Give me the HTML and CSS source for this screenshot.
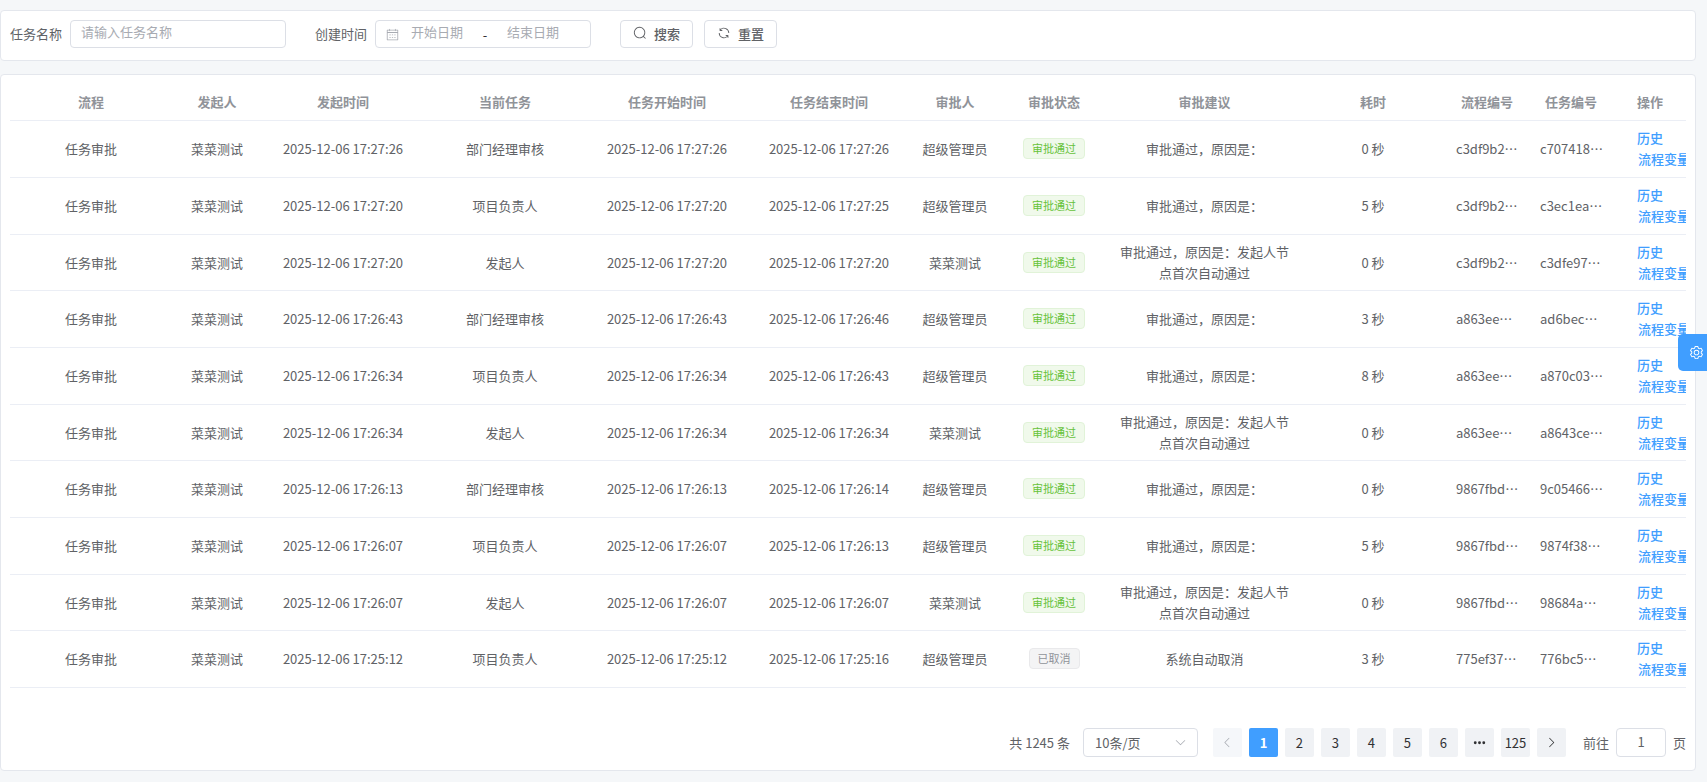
FILE: index.html
```
<!DOCTYPE html>
<html lang="zh-CN">
<head>
    <meta charset="UTF-8">
    <meta name="viewport" content="width=device-width, initial-scale=1.0">
    <title>流程任务</title>
    <link rel="stylesheet" href="styles.css">
</head>
<body>
    <main class="page">
        <form class="card search-form">
            <div class="form-item">
                <label for="taskName">任务名称</label>
                <input class="input" type="text" id="taskName" placeholder="请输入任务名称">
            </div>
            <div class="form-item">
                <label for="startDate">创建时间</label>
                <div class="date-range">
                    <svg class="icon" viewBox="0 0 1024 1024"><path d="M128 384v512h768V192H768v32a32 32 0 1 1-64 0v-32H320v32a32 32 0 0 1-64 0v-32H128v128h768v64H128zm192-256h384V96a32 32 0 1 1 64 0v32h160a32 32 0 0 1 32 32v768a32 32 0 0 1-32 32H96a32 32 0 0 1-32-32V160a32 32 0 0 1 32-32h160V96a32 32 0 0 1 64 0v32zm-32 384h64a32 32 0 0 1 0 64h-64a32 32 0 0 1 0-64zm0 192h64a32 32 0 1 1 0 64h-64a32 32 0 1 1 0-64zm192-192h64a32 32 0 0 1 0 64h-64a32 32 0 0 1 0-64zm0 192h64a32 32 0 1 1 0 64h-64a32 32 0 1 1 0-64zm192-192h64a32 32 0 1 1 0 64h-64a32 32 0 1 1 0-64zm0 192h64a32 32 0 1 1 0 64h-64a32 32 0 1 1 0-64z"/></svg>
                    <input type="text" id="startDate" placeholder="开始日期">
                    <span>-</span>
                    <input type="text" id="endDate" placeholder="结束日期" aria-label="结束日期">
                </div>
            </div>
            <div class="form-buttons">
                <button class="btn" type="button">
                    <svg class="icon" viewBox="0 0 1024 1024"><path d="m795.904 750.72 124.992 124.928a32 32 0 0 1-45.248 45.248L750.656 795.904a416 416 0 1 1 45.248-45.248zM480 832a352 352 0 1 0 0-704 352 352 0 0 0 0 704z"/></svg>
                    搜索
                </button>
                <button class="btn" type="button">
                    <svg class="icon" viewBox="0 0 1024 1024"><path d="M771.776 794.88A384 384 0 0 1 128 512h64a320 320 0 0 0 555.712 216.448H654.72a32 32 0 1 1 0-64h149.056a32 32 0 0 1 32 32v148.928a32 32 0 1 1-64 0v-50.56zM276.288 295.616h92.992a32 32 0 0 1 0 64H220.16a32 32 0 0 1-32-32V178.56a32 32 0 0 1 64 0v50.56A384 384 0 0 1 896.128 512h-64a320 320 0 0 0-555.776-216.384z"/></svg>
                    重置
                </button>
            </div>
        </form>

        <section class="card">
            <table class="task-table">
                <colgroup>
                    <col class="w-lg">
                    <col class="w-sm">
                    <col class="w-lg">
                    <col class="w-lg">
                    <col class="w-lg">
                    <col class="w-lg">
                    <col class="w-sm">
                    <col class="w-status">
                    <col>
                    <col class="w-duration">
                    <col class="w-id">
                    <col class="w-id">
                    <col class="w-ops">
                </colgroup>
                <thead>
                    <tr>
                        <th>流程</th>
                        <th>发起人</th>
                        <th>发起时间</th>
                        <th>当前任务</th>
                        <th>任务开始时间</th>
                        <th>任务结束时间</th>
                        <th>审批人</th>
                        <th>审批状态</th>
                        <th>审批建议</th>
                        <th>耗时</th>
                        <th>流程编号</th>
                        <th>任务编号</th>
                        <th class="ops">操作</th>
                    </tr>
                </thead>
                <tbody>
                    <tr>
                        <td>任务审批</td>
                        <td>菜菜测试</td>
                        <td>2025-12-06 17:27:26</td>
                        <td>部门经理审核</td>
                        <td>2025-12-06 17:27:26</td>
                        <td>2025-12-06 17:27:26</td>
                        <td>超级管理员</td>
                        <td><span class="tag success">审批通过</span></td>
                        <td>审批通过，原因是：</td>
                        <td>0 秒</td>
                        <td class="id">c3df9b2…</td>
                        <td class="id">c707418…</td>
                        <td class="ops"><button class="link">历史</button><button class="link">流程变量</button></td>
                    </tr>
                    <tr>
                        <td>任务审批</td>
                        <td>菜菜测试</td>
                        <td>2025-12-06 17:27:20</td>
                        <td>项目负责人</td>
                        <td>2025-12-06 17:27:20</td>
                        <td>2025-12-06 17:27:25</td>
                        <td>超级管理员</td>
                        <td><span class="tag success">审批通过</span></td>
                        <td>审批通过，原因是：</td>
                        <td>5 秒</td>
                        <td class="id">c3df9b2…</td>
                        <td class="id">c3ec1ea…</td>
                        <td class="ops"><button class="link">历史</button><button class="link">流程变量</button></td>
                    </tr>
                    <tr>
                        <td>任务审批</td>
                        <td>菜菜测试</td>
                        <td>2025-12-06 17:27:20</td>
                        <td>发起人</td>
                        <td>2025-12-06 17:27:20</td>
                        <td>2025-12-06 17:27:20</td>
                        <td>菜菜测试</td>
                        <td><span class="tag success">审批通过</span></td>
                        <td>审批通过，原因是：发起人节点首次自动通过</td>
                        <td>0 秒</td>
                        <td class="id">c3df9b2…</td>
                        <td class="id">c3dfe97…</td>
                        <td class="ops"><button class="link">历史</button><button class="link">流程变量</button></td>
                    </tr>
                    <tr>
                        <td>任务审批</td>
                        <td>菜菜测试</td>
                        <td>2025-12-06 17:26:43</td>
                        <td>部门经理审核</td>
                        <td>2025-12-06 17:26:43</td>
                        <td>2025-12-06 17:26:46</td>
                        <td>超级管理员</td>
                        <td><span class="tag success">审批通过</span></td>
                        <td>审批通过，原因是：</td>
                        <td>3 秒</td>
                        <td class="id">a863ee…</td>
                        <td class="id">ad6bec…</td>
                        <td class="ops"><button class="link">历史</button><button class="link">流程变量</button></td>
                    </tr>
                    <tr>
                        <td>任务审批</td>
                        <td>菜菜测试</td>
                        <td>2025-12-06 17:26:34</td>
                        <td>项目负责人</td>
                        <td>2025-12-06 17:26:34</td>
                        <td>2025-12-06 17:26:43</td>
                        <td>超级管理员</td>
                        <td><span class="tag success">审批通过</span></td>
                        <td>审批通过，原因是：</td>
                        <td>8 秒</td>
                        <td class="id">a863ee…</td>
                        <td class="id">a870c03…</td>
                        <td class="ops"><button class="link">历史</button><button class="link">流程变量</button></td>
                    </tr>
                    <tr>
                        <td>任务审批</td>
                        <td>菜菜测试</td>
                        <td>2025-12-06 17:26:34</td>
                        <td>发起人</td>
                        <td>2025-12-06 17:26:34</td>
                        <td>2025-12-06 17:26:34</td>
                        <td>菜菜测试</td>
                        <td><span class="tag success">审批通过</span></td>
                        <td>审批通过，原因是：发起人节点首次自动通过</td>
                        <td>0 秒</td>
                        <td class="id">a863ee…</td>
                        <td class="id">a8643ce…</td>
                        <td class="ops"><button class="link">历史</button><button class="link">流程变量</button></td>
                    </tr>
                    <tr>
                        <td>任务审批</td>
                        <td>菜菜测试</td>
                        <td>2025-12-06 17:26:13</td>
                        <td>部门经理审核</td>
                        <td>2025-12-06 17:26:13</td>
                        <td>2025-12-06 17:26:14</td>
                        <td>超级管理员</td>
                        <td><span class="tag success">审批通过</span></td>
                        <td>审批通过，原因是：</td>
                        <td>0 秒</td>
                        <td class="id">9867fbd…</td>
                        <td class="id">9c05466…</td>
                        <td class="ops"><button class="link">历史</button><button class="link">流程变量</button></td>
                    </tr>
                    <tr>
                        <td>任务审批</td>
                        <td>菜菜测试</td>
                        <td>2025-12-06 17:26:07</td>
                        <td>项目负责人</td>
                        <td>2025-12-06 17:26:07</td>
                        <td>2025-12-06 17:26:13</td>
                        <td>超级管理员</td>
                        <td><span class="tag success">审批通过</span></td>
                        <td>审批通过，原因是：</td>
                        <td>5 秒</td>
                        <td class="id">9867fbd…</td>
                        <td class="id">9874f38…</td>
                        <td class="ops"><button class="link">历史</button><button class="link">流程变量</button></td>
                    </tr>
                    <tr>
                        <td>任务审批</td>
                        <td>菜菜测试</td>
                        <td>2025-12-06 17:26:07</td>
                        <td>发起人</td>
                        <td>2025-12-06 17:26:07</td>
                        <td>2025-12-06 17:26:07</td>
                        <td>菜菜测试</td>
                        <td><span class="tag success">审批通过</span></td>
                        <td>审批通过，原因是：发起人节点首次自动通过</td>
                        <td>0 秒</td>
                        <td class="id">9867fbd…</td>
                        <td class="id">98684a…</td>
                        <td class="ops"><button class="link">历史</button><button class="link">流程变量</button></td>
                    </tr>
                    <tr>
                        <td>任务审批</td>
                        <td>菜菜测试</td>
                        <td>2025-12-06 17:25:12</td>
                        <td>项目负责人</td>
                        <td>2025-12-06 17:25:12</td>
                        <td>2025-12-06 17:25:16</td>
                        <td>超级管理员</td>
                        <td><span class="tag info">已取消</span></td>
                        <td>系统自动取消</td>
                        <td>3 秒</td>
                        <td class="id">775ef37…</td>
                        <td class="id">776bc5…</td>
                        <td class="ops"><button class="link">历史</button><button class="link">流程变量</button></td>
                    </tr>
                </tbody>
            </table>

            <nav class="pagination" aria-label="分页">
                <span class="total">共 1245 条</span>
                <div class="page-size">
                    <select aria-label="每页条数">
                        <option>10条/页</option>
                    </select>
                    <svg class="icon" viewBox="0 0 1024 1024"><path d="M831.872 340.864 512 652.672 192.128 340.864a30.592 30.592 0 0 0-42.752 0 29.12 29.12 0 0 0 0 41.6L489.664 714.24a32 32 0 0 0 44.672 0l340.288-331.712a29.12 29.12 0 0 0 0-41.728 30.592 30.592 0 0 0-42.752 0z"/></svg>
                </div>
                <div class="pager">
                    <button disabled aria-label="上一页"><svg class="icon" viewBox="0 0 1024 1024"><path d="M609.408 149.376 277.76 489.6a32 32 0 0 0 0 44.672l331.648 340.352a29.12 29.12 0 0 0 41.728 0 30.592 30.592 0 0 0 0-42.752L339.264 511.936l311.872-319.872a30.592 30.592 0 0 0 0-42.688 29.12 29.12 0 0 0-41.728 0z"/></svg></button>
                    <button class="active">1</button>
                    <button>2</button>
                    <button>3</button>
                    <button>4</button>
                    <button>5</button>
                    <button>6</button>
                    <button aria-label="更多"><svg class="icon" viewBox="0 0 1024 1024"><path d="M176 416a112 112 0 1 1 0 224 112 112 0 0 1 0-224zm336 0a112 112 0 1 1 0 224 112 112 0 0 1 0-224zm336 0a112 112 0 1 1 0 224 112 112 0 0 1 0-224z"/></svg></button>
                    <button>125</button>
                    <button aria-label="下一页"><svg class="icon" viewBox="0 0 1024 1024"><path d="M340.864 149.312a30.592 30.592 0 0 0 0 42.752L652.736 512 340.864 831.872a30.592 30.592 0 0 0 0 42.752 29.12 29.12 0 0 0 41.728 0L714.24 534.336a32 32 0 0 0 0-44.672L382.592 149.376a29.12 29.12 0 0 0-41.728 0z"/></svg></button>
                </div>
                <div class="jump">
                    <label for="jumpPage">前往</label>
                    <input class="input" type="text" id="jumpPage" value="1">
                    <span>页</span>
                </div>
            </nav>
        </section>
    </main>

    <button class="setting" aria-label="设置">
        <svg class="icon" viewBox="0 0 1024 1024"><path d="M600.704 64a32 32 0 0 1 30.464 22.208l35.2 109.376c14.784 7.232 28.928 15.36 42.432 24.512l112.384-24.192a32 32 0 0 1 34.432 15.36L944.32 364.8a32 32 0 0 1-4.032 37.504l-77.12 85.12a357.12 357.12 0 0 1 0 49.024l77.12 85.248a32 32 0 0 1 4.032 37.504l-88.704 153.6a32 32 0 0 1-34.432 15.296L708.8 803.904c-13.44 9.088-27.648 17.28-42.368 24.512l-35.264 109.376A32 32 0 0 1 600.704 960H423.296a32 32 0 0 1-30.464-22.208L357.696 828.48a351.616 351.616 0 0 1-42.56-24.64l-112.32 24.256a32 32 0 0 1-34.432-15.36L79.68 659.2a32 32 0 0 1 4.032-37.504l77.12-85.248a357.12 357.12 0 0 1 0-48.896l-77.12-85.248A32 32 0 0 1 79.68 364.8l88.704-153.6a32 32 0 0 1 34.432-15.296l112.32 24.256c13.568-9.152 27.776-17.408 42.56-24.64l35.2-109.312A32 32 0 0 1 423.232 64H600.64zm-23.424 64H446.72l-36.352 113.088-24.512 11.968a294.113 294.113 0 0 0-34.816 20.096l-22.656 15.36-116.224-25.088-65.28 113.152 79.68 88.192-1.92 27.136a293.12 293.12 0 0 0 0 40.192l1.92 27.136-79.808 88.192 65.344 113.152 116.224-25.024 22.656 15.296a294.113 294.113 0 0 0 34.816 20.096l24.512 11.968L446.72 896h130.688l36.48-113.152 24.448-11.904a288.282 288.282 0 0 0 34.752-20.096l22.592-15.296 116.288 25.024 65.28-113.152-79.744-88.192 1.92-27.136a293.12 293.12 0 0 0 0-40.256l-1.92-27.136 79.808-88.128-65.344-113.152-116.288 24.96-22.592-15.232a287.616 287.616 0 0 0-34.752-20.096l-24.448-11.904L577.344 128zM512 320a192 192 0 1 1 0 384 192 192 0 0 1 0-384zm0 64a128 128 0 1 0 0 256 128 128 0 0 0 0-256z"/></svg>
    </button>
</body>
</html>
```
FILE: styles.css
```
* {
    box-sizing: border-box;
}
body {
    margin: 0;
    background: #f5f7f9;
    color: #606266;
    font-family: "Noto Sans CJK SC", sans-serif;
    font-size: 13px;
    line-height: 21px;
}
button, input, select {
    font: inherit;
    color: inherit;
}
button {
    padding: 0;
    border: none;
    background: none;
    cursor: pointer;
}
.icon {
    display: block;
    width: 13px;
    height: 13px;
    fill: currentColor;
    flex: none;
}
.page {
    display: flex;
    flex-direction: column;
    gap: 13px;
    padding: 10px 11px 11px 0;
}
.card {
    padding: 9px;
    background: #fff;
    border: 1px solid #e4e7ed;
    border-radius: 4px;
}

/* search form */
.search-form {
    display: flex;
    flex-wrap: wrap;
    gap: 29px;
    padding-bottom: 12px;
}
.form-item {
    display: flex;
    align-items: center;
    gap: 8px;
}
.form-item label {
    padding-bottom: 2px;
}
.input, .date-range {
    width: 216px;
    height: 28px;
    padding: 0 10px;
    border: 1px solid #dcdfe6;
    border-radius: 4px;
    background: #fff;
    outline: none;
}
.search-form .input {
    padding-bottom: 6px;
}
::placeholder {
    color: #a8abb2;
    opacity: 1;
}
.date-range {
    display: flex;
    align-items: center;
}
.date-range .icon {
    color: #a8abb2;
}
.date-range input {
    width: 76px;
    height: 26px;
    padding: 0 0 6px;
    border: none;
    background: none;
    outline: none;
    text-align: center;
}
.date-range span {
    width: 20px;
    text-align: center;
    color: #303133;
}
.form-buttons {
    display: flex;
    gap: 11px;
}
.btn {
    display: flex;
    align-items: center;
    gap: 7px;
    height: 28px;
    padding: 0 12px 2px;
    border: 1px solid #dcdfe6;
    border-radius: 4px;
    background: #fff;
    font-weight: 500;
}
.btn .icon {
    width: 14px;
    height: 14px;
}

/* table */
.task-table {
    width: 100%;
    table-layout: fixed;
    border-collapse: separate;
    border-spacing: 0;
}
.w-lg {
    width: 162px;
}
.w-sm {
    width: 90px;
}
.w-status {
    width: 108px;
}
.w-duration {
    width: 144px;
}
.w-id {
    width: 84px;
}
.w-ops {
    width: 73px;
}
th, td {
    padding: 6px 11px 8px;
    border-bottom: 1px solid #ebeef5;
    text-align: center;
}
th {
    padding: 7px 0 8px;
    color: #909399;
    font-weight: 700;
}
tbody tr:nth-child(3n) td {
    padding-bottom: 7px;
}
td.id {
    padding-right: 0;
    text-align: left;
    white-space: nowrap;
}
.ops {
    padding-left: 24px;
    padding-right: 0;
    overflow: hidden;
    text-align: left;
}
.link {
    display: block;
    color: #409eff;
    font-weight: 500;
    white-space: nowrap;
}
.link + .link {
    margin-left: 1px;
}
.tag {
    display: inline-block;
    padding: 0 8px;
    border: 1px solid;
    border-radius: 4px;
    font-size: 11px;
    line-height: 19px;
}
.tag.success {
    color: #67c23a;
    background: #f0f9eb;
    border-color: #e1f3d8;
}
.tag.info {
    color: #909399;
    background: #f4f4f5;
    border-color: #e9e9eb;
}

/* pagination */
.pagination {
    display: flex;
    align-items: center;
    justify-content: flex-end;
    margin-top: 40px;
    padding-bottom: 4px;
}
.page-size {
    display: flex;
    align-items: center;
    width: 115px;
    margin: 0 15px 0 13px;
    border: 1px solid #dcdfe6;
    border-radius: 4px;
}
.page-size select {
    flex: 1;
    height: 27px;
    margin-right: -23px;
    padding: 0 11px;
    border: none;
    background: none;
    outline: none;
    appearance: none;
}
.page-size .icon {
    margin-right: 10px;
    color: #a8abb2;
    pointer-events: none;
}
.pager {
    display: flex;
    gap: 7px;
}
.pager button {
    display: flex;
    align-items: center;
    justify-content: center;
    width: 29px;
    height: 29px;
    border-radius: 2px;
    background: #f0f2f5;
    color: #303133;
}
.pager button:disabled {
    background: #f5f7fa;
    color: #a8abb2;
    cursor: not-allowed;
}
.pager .active {
    background: #409eff;
    color: #fff;
    font-weight: 700;
}
.jump {
    display: flex;
    align-items: center;
    gap: 7px;
    margin-left: 17px;
}
.jump .input {
    width: 50px;
    height: 29px;
    padding: 0 0 3px;
    text-align: center;
}

/* settings handle at the window edge */
.setting {
    position: fixed;
    top: 334px;
    right: 0;
    padding: 11px 3px 11px 11px;
    border-radius: 5px 0 0 5px;
    background: #409eff;
    color: #fff;
}
.setting .icon {
    width: 15px;
    height: 15px;
}
```
